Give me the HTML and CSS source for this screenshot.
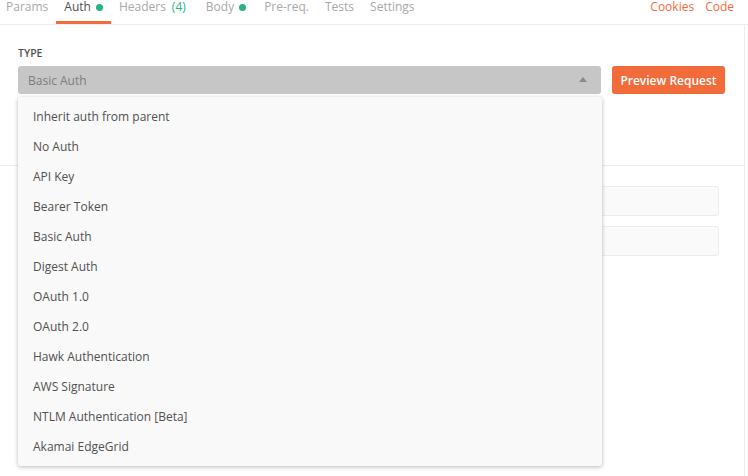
FILE: index.html
```html
<!DOCTYPE html>
<html>
<head>
<meta charset="utf-8">
<link rel="stylesheet" href="styles.css">
</head>
<body>
<div class="tabbar">
  <div class="tabs">
    <span class="tab">Params</span>
    <span class="tab active">Auth <i class="dot"></i></span>
    <span class="tab">Headers <span class="count">(4)</span></span>
    <span class="tab">Body <i class="dot"></i></span>
    <span class="tab">Pre-req.</span>
    <span class="tab">Tests</span>
    <span class="tab">Settings</span>
  </div>
  <div class="links">
    <span class="link">Cookies</span>
    <span class="link">Code</span>
  </div>
</div>
<div class="panel">
  <div class="type-section">
    <div class="label">TYPE</div>
    <div class="type-row">
      <div class="select-wrap">
        <div class="select">
          <span>Basic Auth</span>
          <svg class="caret" width="8" height="5" viewBox="0 0 8 5"><path d="M0 5 L4 0 L8 5 Z" fill="#8a8a8a"/></svg>
        </div>
        <ul class="menu">
          <li>Inherit auth from parent</li>
          <li>No Auth</li>
          <li>API Key</li>
          <li>Bearer Token</li>
          <li>Basic Auth</li>
          <li>Digest Auth</li>
          <li>OAuth 1.0</li>
          <li>OAuth 2.0</li>
          <li>Hawk Authentication</li>
          <li>AWS Signature</li>
          <li>NTLM Authentication [Beta]</li>
          <li>Akamai EdgeGrid</li>
        </ul>
      </div>
      <button class="preview">Preview Request</button>
    </div>
  </div>
  <div class="fields">
    <div class="field"></div>
    <div class="field"></div>
  </div>
</div>
</body>
</html>
```
FILE: styles.css
```css
* { box-sizing: border-box; }
html, body { margin: 0; padding: 0; background: #fff; }
body {
  width: 748px;
  height: 476px;
  overflow: hidden;
  font-family: "Open Sans", "Noto Sans", sans-serif;
  font-size: 12px;
  color: #505050;
}
.tabbar {
  display: flex;
  justify-content: space-between;
  height: 25px;
  border-bottom: 1px solid #ececec;
}
.tabs { display: flex; padding-left: 0; }
.tab {
  display: flex;
  align-items: flex-start;
  gap: 4px;
  height: 24px;
  line-height: 14px;
  padding: 0 8px;
  color: #a8a8a8;
  border-bottom: 3px solid transparent;
  white-space: nowrap;
}
.tab:first-child { padding-left: 6px; }
.tab:nth-child(3) { padding-right: 12px; }
.tab:nth-child(4) { padding-right: 10px; }
.tab.active { color: #505050; border-bottom-color: #f26b3a; }
.tab .count { color: #26b47f; margin-left: 2px; }
.dot {
  display: inline-block;
  width: 7px;
  height: 7px;
  border-radius: 50%;
  background: #26b47f;
  margin-top: 4px;
  margin-left: 1px;
}
.links { display: flex; gap: 11px; padding-right: 14px; }
.link { color: #f26b3a; line-height: 14px; }
.panel {
  height: 451px;
  border-right: 1px solid #ececec;
  width: 745px;
}
.type-section {
  height: 141px;
  border-bottom: 1px solid #ececec;
  padding: 21px 0 0 18px;
}
.label {
  font-size: 10.5px;
  font-weight: 600;
  color: #505050;
  line-height: 14px;
  margin-bottom: 6px;
}
.type-row { display: flex; gap: 11px; }
.select-wrap { position: relative; width: 583px; }
.select {
  height: 28px;
  background: #c6c6c6;
  border-radius: 3px;
  display: flex;
  align-items: center;
  justify-content: space-between;
  padding: 0 14px 0 10px;
  color: #7d7d7d;
}
.caret { margin-top: -1px; }
.menu {
  position: absolute;
  top: 31px;
  left: 0;
  width: 584px;
  margin: 0;
  padding: 5px 0 4px;
  list-style: none;
  background: #f9f9f9;
  border-radius: 3px;
  box-shadow: 0 1px 4px rgba(0, 0, 0, 0.28);
  z-index: 5;
}
.menu li {
  height: 30px;
  line-height: 30px;
  padding-left: 15px;
  color: #505050;
}
.preview {
  height: 28px;
  width: 113px;
  border: none;
  border-radius: 3px;
  background: #f26b3a;
  color: #fff;
  font-family: "Open Sans", "Noto Sans", sans-serif;
  font-size: 12px;
  font-weight: 600;
  padding: 0;
  cursor: pointer;
}
.fields {
  display: flex;
  flex-direction: column;
  gap: 10px;
  padding: 20px 0 0 330px;
}
.field {
  width: 389px;
  height: 30px;
  background: #fafafa;
  border: 1px solid #ececec;
  border-radius: 3px;
}
```
